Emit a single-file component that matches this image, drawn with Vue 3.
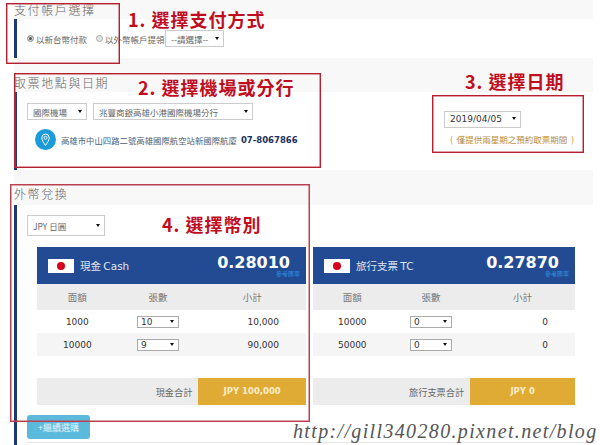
<script setup>
const tables = [
  { title: '現金', en: 'Cash', rate: '0.28010', totalLabel: '現金合計', total: 'JPY 100,000', rows: [
    { face: '1000', qty: '10', sub: '10,000' },
    { face: '10000', qty: '9', sub: '90,000' }
  ] },
  { title: '旅行支票', en: 'TC', rate: '0.27870', totalLabel: '旅行支票合計', total: 'JPY 0', rows: [
    { face: '10000', qty: '0', sub: '0' },
    { face: '50000', qty: '0', sub: '0' }
  ] }
]
const callouts = [
  { text: '1. 選擇支付方式', cls: 'c1' },
  { text: '2. 選擇機場或分行', cls: 'c2' },
  { text: '3. 選擇日期', cls: 'c3' },
  { text: '4. 選擇幣別', cls: 'c4' }
]
</script>

<template>
  <div class="page">
    <main class="main">
      <h2 class="title t1">支付帳戶選擇</h2>
      <section class="card pay">
        <label class="radio on"><i></i>以新台幣付款</label>
        <label class="radio off"><i></i>以外幣帳戶提領</label>
        <span class="sel w59"><select><option>--請選擇--</option></select></span>
      </section>

      <h2 class="title t2">取票地點與日期</h2>
      <section class="card place">
        <div class="place-left">
          <div class="place-row">
            <span class="sel w60"><select><option>國際機場</option></select></span>
            <span class="sel w160"><select><option>兆豐商銀高雄小港國際機場分行</option></select></span>
          </div>
          <div class="addr">
            <svg class="pin" width="21" height="21" viewBox="0 0 21 21">
              <circle cx="10.5" cy="10.5" r="10.5" fill="#1b9bd8" />
              <path d="M10.5 16.5 C8.6 13.4 6.8 11.3 6.8 8.8 A3.7 3.7 0 0 1 14.2 8.8 C14.2 11.3 12.4 13.4 10.5 16.5 Z" fill="none" stroke="#fff" stroke-width="1" />
              <circle cx="10.5" cy="8.8" r="1.5" fill="none" stroke="#fff" stroke-width="0.9" />
            </svg>
            <span class="addr-text">高雄市中山四路二號高雄國際航空站新國際航廈</span>
            <b class="phone">07-8067866</b>
          </div>
        </div>
        <div class="place-right">
          <span class="sel w77 latin"><select><option>2019/04/05</option></select></span>
          <p class="note">( 僅提供兩星期之預約取票期間 )</p>
        </div>
      </section>

      <h2 class="title t3">外幣兌換</h2>
      <section class="card fx">
        <span class="sel w78"><select><option>JPY 日圓</option></select></span>
        <div class="tables">
          <div v-for="t in tables" :key="t.en" class="tbl">
            <header class="tbl-head">
              <span class="flag"><i></i></span>
              <span class="tbl-name">{{ t.title }} <em>{{ t.en }}</em></span>
              <span class="rate">{{ t.rate }}<small>參考匯率</small></span>
            </header>
            <div class="grid th">
              <span>面額</span><span>張數</span><span>小計</span>
            </div>
            <div v-for="r in t.rows" :key="r.face" class="grid tr">
              <span>{{ r.face }}</span>
              <span><span class="sel qty"><select><option>{{ r.qty }}</option></select></span></span>
              <span class="sub">{{ r.sub }}</span>
            </div>
            <div class="total">
              <span class="total-label">{{ t.totalLabel }}</span>
              <span class="total-value">{{ t.total }}</span>
            </div>
          </div>
        </div>
        <button class="more" type="button">+繼續選購</button>
        <div class="rule"></div>
      </section>
    </main>

    <div class="box b1"></div>
    <div class="box b2"></div>
    <div class="box b3"></div>
    <div class="box b4"></div>
    <div v-for="c in callouts" :key="c.cls" class="callout" :class="c.cls">{{ c.text }}</div>
    <div class="mark">http://gill340280.pixnet.net/blog</div>
  </div>
</template>

<style>
html, body { margin: 0; background: #fff; }
</style>

<style scoped>
.page {
  position: relative;
  width: 600px;
  height: 445px;
  overflow: hidden;
  background: #fff;
  font-family: "Noto Sans CJK TC", "DejaVu Sans", sans-serif;
  color: #555;
}
.main {
  margin-left: 14px;
  width: 579px;
  height: 445px;
  background: #f8f8f8;
}
.title {
  margin: 0;
  font-size: 12px;
  line-height: 14px;
  font-weight: 300;
  letter-spacing: 1.6px;
  color: #666;
  white-space: nowrap;
}
.t1 { height: 19px; padding-top: 3px; box-sizing: border-box; }
.t2 { height: 34px; padding-top: 18px; box-sizing: border-box; }
.t3 { height: 35px; padding-top: 17px; box-sizing: border-box; }
.card {
  background: #fff;
  border-left: 3px solid #1d3a78;
  box-sizing: border-box;
}
.pay {
  height: 39px;
  display: flex;
  align-items: center;
  padding-left: 10px;
}
.radio {
  display: flex;
  align-items: center;
  font-size: 8.5px;
  line-height: 12px;
  color: #666;
  white-space: nowrap;
}
.radio i {
  width: 5px;
  height: 5px;
  border-radius: 50%;
  margin-right: 2px;
  border: 1px solid #aaa;
  background: #e4e4e4;
}
.radio.on i { background: #555; box-shadow: inset 0 0 0 1px #ddd; }
.radio.on { width: 69px; }
.radio.off { width: 69px; }
.sel {
  position: relative;
  display: inline-block;
  height: 17px;
  flex: none;
}
.sel::after {
  content: "";
  position: absolute;
  right: 5px;
  top: 50%;
  margin-top: -2px;
  border-left: 2px solid transparent;
  border-right: 2px solid transparent;
  border-top: 3px solid #111;
}
.sel select {
  appearance: none;
  display: block;
  width: 100%;
  height: 100%;
  box-sizing: border-box;
  border: 1px solid #ccc;
  background: #fff;
  color: #666;
  padding: 0 0 0 5px;
  font-family: "Noto Sans CJK TC", "DejaVu Sans", sans-serif;
  font-size: 8.5px;
  border-radius: 0;
}
.w59 { width: 59px; }
.w60 { width: 60px; }
.w160 { width: 160px; }
.w77 { width: 77px; }
.w78 { width: 78px; height: 21px; display: block; }
.latin select { font-family: "DejaVu Sans", sans-serif; font-size: 9px; color: #333; }
.place {
  height: 78px;
  display: flex;
  padding: 11px 0 0 10px;
}
.place-left { width: 417px; }
.place-row { display: flex; gap: 6px; }
.addr {
  display: flex;
  align-items: center;
  margin: 9px 0 0 8px;
  height: 21px;
}
.pin { flex: none; margin-right: 5px; }
.addr-text {
  font-size: 8.4px;
  color: #4f5f75;
  white-space: nowrap;
  margin-right: 4px;
}
.phone {
  font-family: "DejaVu Sans", sans-serif;
  font-size: 8.5px;
  color: #1d2f5c;
  white-space: nowrap;
}
.place-right { width: 149px; }
.note {
  margin: 5px 0 0 6px;
  font-size: 8.5px;
  line-height: 12px;
  word-spacing: 2px;
  color: #b98c3e;
  white-space: nowrap;
}
.fx {
  height: 240px;
  padding: 10px 0 0 10px;
  position: relative;
}
.tables {
  display: grid;
  grid-template-columns: 269px 262px;
  column-gap: 7px;
  margin: 11px 0 10px 10px;
}
.tbl-head {
  height: 37px;
  background: #224b94;
  display: flex;
  align-items: center;
  padding-left: 11px;
}
.flag {
  width: 26px;
  height: 14px;
  background: #fff;
  display: flex;
  align-items: center;
  justify-content: center;
  margin-right: 6px;
  flex: none;
}
.flag i {
  width: 8px;
  height: 8px;
  border-radius: 50%;
  background: #d7001a;
}
.tbl-name {
  font-size: 10.5px;
  color: #dfe6f0;
  white-space: nowrap;
}
.tbl-name em { font-style: normal; font-family: "DejaVu Sans", sans-serif; }
.rate {
  position: relative;
  margin-left: auto;
  margin-right: 16px;
  margin-top: -6px;
  font-family: "DejaVu Sans", sans-serif;
  font-weight: 700;
  font-size: 16px;
  line-height: 14px;
  color: #fff;
}
.rate small {
  position: absolute;
  right: -10px;
  top: 14px;
  font-family: "Noto Sans CJK TC", sans-serif;
  font-weight: 400;
  font-size: 6px;
  line-height: 7px;
  color: #2f8fe0;
  white-space: nowrap;
}
.grid {
  display: grid;
  grid-template-columns: 30% 30% 40%;
  align-items: center;
  text-align: center;
}
.th {
  height: 26px;
  background: #ececec;
  font-size: 9.5px;
  color: #777;
}
.tr {
  height: 23px;
  font-family: "DejaVu Sans", sans-serif;
  font-size: 9px;
  color: #333;
}
.tr:nth-of-type(3) { background: #f5f5f5; }
.sub { text-align: right; padding-right: 27px; }
.qty { width: 42px; height: 12px; vertical-align: middle; }
.qty select {
  font-family: "DejaVu Sans", sans-serif;
  font-size: 9px;
  color: #333;
  padding-left: 3px;
  border-color: #aaa;
  line-height: 10px;
}
.total {
  display: grid;
  grid-template-columns: 60% 40%;
  height: 27px;
  margin-top: 22px;
  background: #ececec;
}
.total-label {
  align-self: center;
  text-align: right;
  padding-right: 6px;
  font-size: 9.2px;
  color: #666;
}
.total-value {
  background: #e0ab35;
  color: #fbeecb;
  font-family: "DejaVu Sans", sans-serif;
  font-weight: 700;
  font-size: 8.5px;
  line-height: 27px;
  text-align: center;
}
.more {
  display: block;
  width: 63px;
  height: 24px;
  padding: 0;
  border: 0;
  border-radius: 3px;
  background: #5bbadc;
  color: #e6f5fb;
  font-family: "Noto Sans CJK TC", sans-serif;
  font-size: 9px;
}
.rule {
  height: 1px;
  background: #e6e6e6;
  margin-top: 3px;
}
.box {
  position: absolute;
  box-sizing: border-box;
  border: 1px solid #b5202f;
  box-shadow: inset 0 0 0 0.5px #c0404e;
  pointer-events: none;
}
.b1 { left: 6px; top: 3px; width: 114px; height: 61px; }
.b2 { left: 14px; top: 73px; width: 307px; height: 95px; }
.b3 { left: 432px; top: 95px; width: 152px; height: 58px; }
.b4 { left: 10px; top: 184px; width: 300px; height: 238px; border-color: #b8404f; }
.callout {
  position: absolute;
  font-family: "Noto Sans CJK TC", sans-serif;
  font-weight: 700;
  font-size: 18px;
  line-height: 22px;
  letter-spacing: 1px;
  color: #c00d1e;
  white-space: nowrap;
}
.c1 { left: 128px; top: 8px; }
.c2 { left: 138px; top: 76px; }
.c3 { left: 465px; top: 70px; }
.c4 { left: 162px; top: 213px; }
.mark {
  position: absolute;
  left: 293px;
  top: 419px;
  font-family: "Liberation Serif", serif;
  font-style: italic;
  font-size: 20px;
  line-height: 24px;
  letter-spacing: 1.35px;
  color: #555;
  white-space: nowrap;
}
</style>
